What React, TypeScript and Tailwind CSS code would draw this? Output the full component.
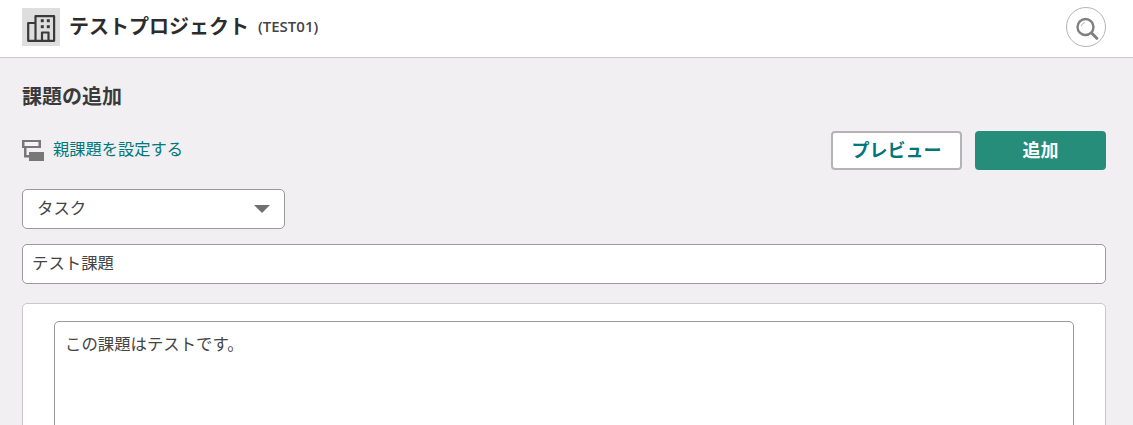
const fontStack = "font-['Open_Sans','Noto_Sans_CJK_JP',sans-serif]";

function BuildingIcon() {
  return (
    <svg viewBox="0 0 38 38" className="w-[38px] h-[38px]" fill="none" stroke="#3a3a3a" strokeWidth="2.200" strokeLinejoin="round">
      <path d="M13.500 15H6.200v17.800h7.300" />
      <path d="M13.500 32.800V8.200h18.600v24.600z" />
      <path d="M20 32.800V24.500h6.500v8.300" />
      <g fill="#3a3a3a" stroke="none">
        <rect x="18.800" y="11.200" width="3" height="3" />
        <rect x="24.800" y="11.200" width="3" height="3" />
        <rect x="18.800" y="17.200" width="3" height="3" />
        <rect x="24.800" y="17.200" width="3" height="3" />
      </g>
    </svg>
  );
}

function SearchIcon() {
  return (
    <svg viewBox="0 0 26 26" className="w-[26px] h-[26px]" fill="none" stroke="#808080">
      <circle cx="12.500" cy="13" r="8" strokeWidth="2.400" />
      <path d="M8.300 12.500a4.600 4.600 0 0 1 3.600-4" strokeWidth="1" stroke="#b5b5b5" />
      <path d="M18.800 19.300l5 5" strokeWidth="3" strokeLinecap="round" />
    </svg>
  );
}

function ParentIcon() {
  return (
    <svg viewBox="0 0 22 21" className="w-[22px] h-[21px] shrink-0">
      <path d="M0 0h19v8H0z" fill="#777" />
      <path d="M2.500 2h14v4h-14z" fill="#f4f3f5" />
      <path d="M2 8h2.500v7H8v2.500H2z" fill="#777" />
      <path d="M7 12h15v9H7z" fill="#777" />
    </svg>
  );
}

export default function App() {
  return (
    <div className={`h-[425px] overflow-hidden bg-[#f1eff2] text-[#444] ${fontStack}`}>
      <header className="h-[58px] bg-white border-b border-[#c9c8ca] pl-[22px] pr-[27px] pb-[4px] flex items-center">
        <div className="w-[38px] h-[38px] bg-[#dedede] flex items-center justify-center">
          <BuildingIcon />
        </div>
        <h1 className="ml-[9px] text-[20px] font-bold leading-none text-[#2c2c2c]">テストプロジェクト</h1>
        <span className="ml-[9px] text-[15px] font-semibold text-[#444]">(TEST01)</span>
        <button className="ml-auto w-[40px] h-[40px] rounded-full border border-[#b5b5b5] flex items-center justify-center">
          <SearchIcon />
        </button>
      </header>

      <main className="pl-[22px] pr-[27px] pt-[25px]">
        <h2 className="text-[20px] leading-[28px] font-bold text-[#3a3a3a]">課題の追加</h2>

        <div className="mt-[20px] flex items-center justify-between h-[39px]">
          <a className="flex items-center gap-[9px] text-[16.250px] text-[#00797a]">
            <ParentIcon />
            <span className="mb-[2px]">親課題を設定する</span>
          </a>
          <div className="flex gap-[13px]">
            <button className="w-[131px] h-[39px] rounded-[4px] bg-white border-2 border-[#b4b3b6] text-[18px] font-bold text-[#00757a]">
              プレビュー
            </button>
            <button className="w-[131px] h-[39px] rounded-[4px] bg-[#268d7b] text-[18px] font-bold text-white">
              追加
            </button>
          </div>
        </div>

        <div className="mt-[19px] w-[263px] h-[40px] rounded-[5px] bg-white border border-[#9a999c] pl-[14px] pr-[14px] pb-[2px] flex items-center justify-between text-[16.400px]">
          タスク
          <span className="mt-[2px] w-0 h-0 border-x-[8px] border-x-transparent border-t-[8px] border-t-[#707070]" />
        </div>

        <div className="mt-[15px] h-[40px] rounded-[5px] bg-white border border-[#9a999c] pl-[9px] pb-[2px] flex items-center text-[16.400px]">
          テスト課題
        </div>

        <div className="mt-[19px] h-[200px] rounded-[5px] bg-white border border-[#c9c8ca] pt-[17px] px-[31px]">
          <div className="h-[180px] rounded-[5px] border border-[#9a999c] pl-[10px] pt-[11px] text-[16.400px] leading-[22px]">
            この課題はテストです。
          </div>
        </div>
      </main>
    </div>
  );
}
